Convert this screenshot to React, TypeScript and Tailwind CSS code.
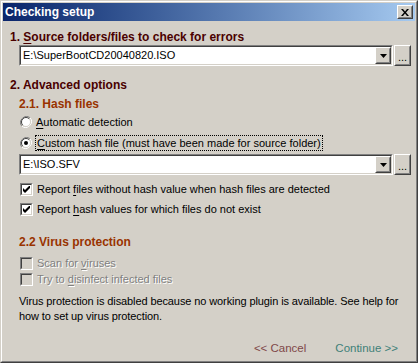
import React from 'react';

const ui = { fontFamily: '"Liberation Sans", Arial, sans-serif' };

const Raised = ({ className = '', children }: { className?: string; children?: React.ReactNode }) => (
  <div className={`border border-t-white border-l-white border-r-[#404040] border-b-[#404040] bg-[#d4d0c8] ${className}`}>
    <div className="w-full h-full border border-t-[#d4d0c8] border-l-[#d4d0c8] border-r-[#808080] border-b-[#808080] flex items-center justify-center">
      {children}
    </div>
  </div>
);

const Arrow = () => (
  <svg width="7" height="4" viewBox="0 0 7 4">
    <path d="M0 0h7L3.5 4z" fill="#000" />
  </svg>
);

const Combo = ({ value }: { value: string }) => (
  <div className="flex ml-[19px] gap-[1px]">
    <div className="w-[374px] h-[21px] border border-t-[#808080] border-l-[#808080] border-r-white border-b-white">
      <div className="h-full border border-t-[#404040] border-l-[#404040] border-r-[#d4d0c8] border-b-[#d4d0c8] bg-white flex items-center">
        <span className="flex-1 pl-[2px] text-[11px] text-black leading-none">{value}</span>
        <Raised className="w-[16px] h-[17px]">
          <Arrow />
        </Raised>
      </div>
    </div>
    <Raised className="w-[17px] h-[21px]">
      <span className="text-[11px] leading-none text-black pt-[3px]">...</span>
    </Raised>
  </div>
);

const Radio = ({ checked }: { checked?: boolean }) => (
  <svg width="12" height="12" viewBox="0 0 12 12">
    <path d="M10.2 1.8A6 6 0 0 0 1.8 10.2" stroke="#808080" fill="none" strokeWidth="1" />
    <path d="M1.8 10.2A6 6 0 0 0 10.2 1.8" stroke="#fff" fill="none" strokeWidth="1" />
    <circle cx="6" cy="6" r="4.5" fill="#fff" />
    <path d="M9.2 2.8A4.5 4.5 0 0 0 2.8 9.2" stroke="#404040" fill="none" strokeWidth="1" />
    <path d="M2.8 9.2A4.5 4.5 0 0 0 9.2 2.8" stroke="#d4d0c8" fill="none" strokeWidth="1" />
    {checked && <circle cx="6" cy="6" r="2" fill="#000" />}
  </svg>
);

const Check = ({ checked, disabled }: { checked?: boolean; disabled?: boolean }) => (
  <div className="w-[13px] h-[13px] border border-t-[#808080] border-l-[#808080] border-r-white border-b-white shrink-0">
    <div
      className={`w-full h-full border border-t-[#404040] border-l-[#404040] border-r-[#d4d0c8] border-b-[#d4d0c8] ${
        disabled ? 'bg-[#d4d0c8]' : 'bg-white'
      } flex items-center justify-center`}
    >
      {checked && (
        <svg width="7" height="7" viewBox="0 0 7 7">
          <path d="M0 2v3l2 2 5-5V-1L2 4z" fill="#000" />
        </svg>
      )}
    </div>
  </div>
);

const U = ({ children }: { children: React.ReactNode }) => <span className="underline underline-offset-2">{children}</span>;

export default function App() {
  return (
    <div style={ui} className="w-[418px] h-[363px] bg-[#d4d0c8] border border-t-[#d4d0c8] border-l-[#d4d0c8] border-r-[#404040] border-b-[#404040] text-[11px] text-black">
      <div className="h-full border border-t-white border-l-white border-r-[#808080] border-b-[#808080] p-[1px] flex flex-col">
        {/* title bar */}
        <div className="h-[18px] bg-gradient-to-r from-[#0a246a] to-[#a6caf0] flex items-center pl-[2px] pr-[2px]">
          <span className="flex-1 text-white font-bold text-[12px] leading-none">Checking setup</span>
          <Raised className="w-[16px] h-[14px]">
            <svg width="8" height="7" viewBox="0 0 8 7">
              <path d="M0 0h2l2 2.5L6 0h2L5 3.5 8 7H6L4 4.5 2 7H0l3-3.5z" fill="#000" />
            </svg>
          </Raised>
        </div>

        <div className="flex flex-col">
          <div className="mt-[9px] ml-[7px] h-[14px] leading-[14px] font-bold text-[12px] text-[#4a0000]">
            1. <U>S</U>ource folders/files to check for errors
          </div>
          <div className="mt-[1px] -ml-[3px]">
            <Combo value="E:\SuperBootCD20040820.ISO" />
          </div>

          <div className="mt-[12px] ml-[7px] h-[14px] leading-[14px] font-bold text-[12px] text-[#4a0000]">
            2. Advanced options
          </div>
          <div className="mt-[5px] ml-[16px] h-[14px] leading-[14px] font-bold text-[12px] text-[#993300]">
            2.1. Hash files
          </div>

          <div className="mt-[3px] ml-[17px] h-[16px] flex items-center gap-[4px]">
            <Radio />
            <span><U>A</U>utomatic detection</span>
          </div>
          <div className="mt-[5px] ml-[17px] h-[16px] flex items-center gap-[3px]">
            <Radio checked />
            <span className="border border-dotted border-black px-[1px] leading-[14px]">
              <U>C</U>ustom hash file (must have been made for source folder)
            </span>
          </div>

          <div className="mt-[3px] -ml-[3px]">
            <Combo value="E:\ISO.SFV" />
          </div>

          <div className="mt-[6px] ml-[17px] h-[16px] flex items-center gap-[4px]">
            <Check checked />
            <span>Report <U>f</U>iles without hash value when hash files are detected</span>
          </div>
          <div className="mt-[4px] ml-[17px] h-[16px] flex items-center gap-[4px]">
            <Check checked />
            <span>Report <U>h</U>ash values for which files do not exist</span>
          </div>

          <div className="mt-[18px] ml-[16px] h-[14px] leading-[14px] font-bold text-[12px] text-[#993300]">
            2.2 Virus protection
          </div>

          <div className="mt-[6px] ml-[17px] h-[16px] flex items-center gap-[4px]">
            <Check disabled />
            <span className="text-[#808080] [text-shadow:1px_1px_0_#fff]">Scan for <U>v</U>iruses</span>
          </div>
          <div className="ml-[17px] h-[16px] flex items-center gap-[4px]">
            <Check disabled />
            <span className="text-[#808080] [text-shadow:1px_1px_0_#fff]">Try to <U>d</U>isinfect infected files</span>
          </div>

          <p className="mt-[7px] ml-[16px] mr-[6px] leading-[15px] tracking-[-0.1px]">
            Virus protection is disabled because no working plugin is available. See help for how to set up virus protection.
          </p>

          <div className="mt-[17px] flex justify-end gap-[29px] pr-[17px] text-[11.5px] leading-[14px]">
            <span className="text-[#804848]">&lt;&lt; Cancel</span>
            <span className="text-[#408078]">Continue &gt;&gt;</span>
          </div>
        </div>
      </div>
    </div>
  );
}
